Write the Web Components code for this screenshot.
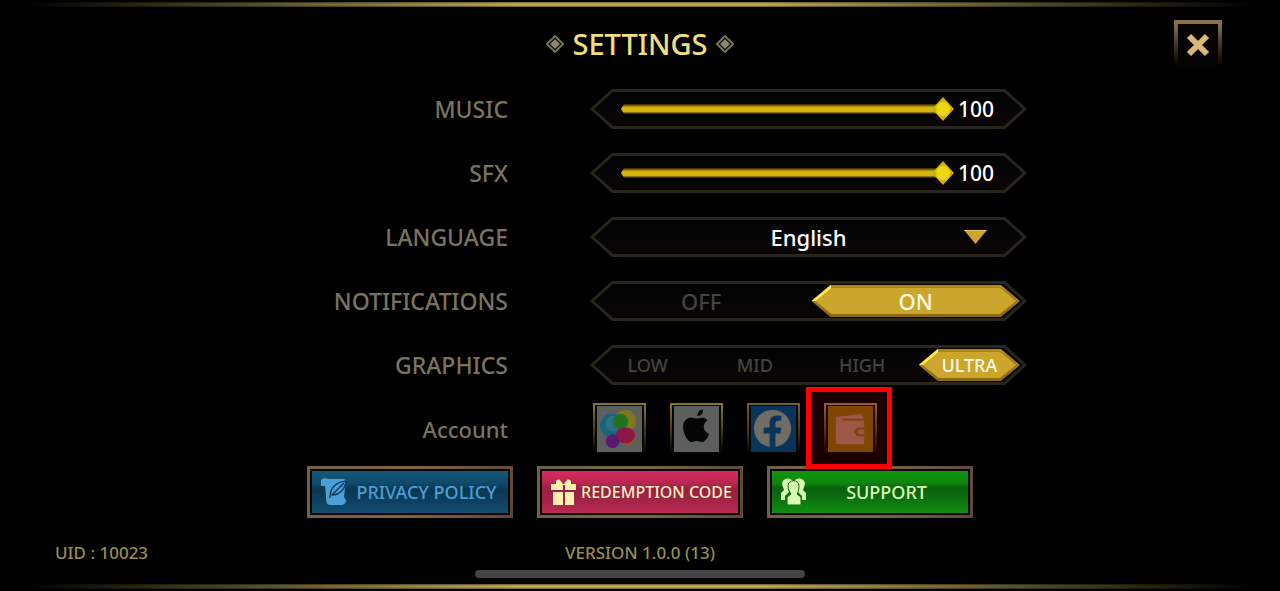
<!DOCTYPE html>
<html lang="en">
<head>
<meta charset="utf-8">
<meta name="viewport" content="width=device-width, initial-scale=1">
<title>Settings</title>
<style>
  html, body { margin: 0; background: #000; }
  body { font-family: "Noto Sans", "Open Sans", sans-serif; font-weight: 500; }
</style>
</head>
<body>
<settings-screen>
  <setting-slider label="MUSIC" value="100"></setting-slider>
  <setting-slider label="SFX" value="100"></setting-slider>
  <setting-select label="LANGUAGE" options="English"></setting-select>
  <setting-choice label="NOTIFICATIONS" options="OFF,ON" value="ON"></setting-choice>
  <setting-choice label="GRAPHICS" options="LOW,MID,HIGH,ULTRA" value="ULTRA" compact></setting-choice>
  <setting-accounts label="Account">
    <account-tile name="Game Center" tone="light">
      <svg viewBox="0 0 46 46" width="45" height="45" aria-hidden="true">
        <circle cx="29" cy="15" r="11" fill="#85781c"/>
        <circle cx="15" cy="20" r="12" fill="#19637e"/>
        <circle cx="17" cy="18" r="8" fill="#2a7186"/>
        <ellipse cx="24" cy="16" rx="8" ry="8" fill="#247021"/>
        <circle cx="31" cy="31" r="9" fill="#8c5a27"/>
        <ellipse cx="29" cy="30" rx="10" ry="8" fill="#8d1745"/>
        <circle cx="16" cy="36" r="7" fill="#561a6e"/>
      </svg>
    </account-tile>
    <account-tile name="Apple" tone="light">
      <svg viewBox="-2 -1 50 50" width="45" height="45" aria-hidden="true">
        <path fill="#050505" d="M24 10c0-4 3-7 6-7 1 4-3 8-6 7zM35 15c-6 4-5 12 2 15-2 5-5 9-8 9-2 0-3-1-6-1-2 0-3 1-6 1-5 0-16-22-2-27 3-1 6 1 8 1 3 0 9-3 12 2z"/>
      </svg>
    </account-tile>
    <account-tile name="Facebook" tone="blue">
      <svg viewBox="0 0 46 46" width="45" height="45" aria-hidden="true">
        <circle cx="22" cy="23" r="19" fill="#716d64"/>
        <path fill="#0b345c" d="M19 42V28h-6v-6h6v-4c0-7 4-9 12-8v5c-5 0-6 0-6 4v3h6l-1 6h-5v14z"/>
      </svg>
    </account-tile>
    <account-tile name="Wallet" tone="amber" highlighted>
      <svg viewBox="0 0 46 46" width="45" height="45" aria-hidden="true">
        <path fill="#946052" d="M8 11l12-1 13-2 3 3v2H15v2h22v7h-7l-4 4 4 5h7v8H8z"/>
        <path fill="#946052" d="M32 24h5v5h-5l-2-3z"/>
      </svg>
    </account-tile>
  </setting-accounts>
  <action-button slot="actions" tone="privacy" text="PRIVACY POLICY">
    <svg viewBox="0 0 27 28" width="27" height="28" aria-hidden="true">
      <path fill="#4a9fd6" d="M1 2c2-2 5-2 7-1h15c2 0 3 1 3 2l-2 16 2 3c0 3-2 5-5 5H10c-4 0-4-5-4-9L5 8H1z"/>
      <path fill="#4a9fd6" stroke="#0d3b59" stroke-width="1.5" stroke-linejoin="round" d="M10 20c0-10 6-16 16-17-1 8-6 14-14 14l12-12"/>
    </svg>
  </action-button>
  <action-button slot="actions" tone="redeem" text="REDEMPTION CODE">
    <svg viewBox="0 0 27 28" width="27" height="28" aria-hidden="true">
      <path fill="#fff0b0" d="M1 6h5V4c0-2 2-3 4-2l3 4h1l3-4c2-1 4 0 4 2v2h5v6H15V7h-2v5H1zM3 14h10v13H3zM15 14h9v13h-9z"/>
    </svg>
  </action-button>
  <action-button slot="actions" tone="support" text="SUPPORT">
    <svg viewBox="0 0 27 28" width="27" height="28" aria-hidden="true">
      <path fill="#d9ffae" d="M2 6c0-6 9-8 11-2-5 2-6 6-4 10l-4 4v4H1v-7l3-3zM25 6c0-6-9-8-11-2 5 2 6 6 4 10l4 4v4h4v-7l-3-3z"/>
      <path fill="#d9ffae" stroke="#0b6b12" stroke-width="1" d="M8 8c0-7 11-7 11 0 0 4-1 6-2 8l4 3v8H7v-8l4-3c-1-2-3-4-3-8z"/>
    </svg>
  </action-button>
  <span slot="uid">UID : 10023</span>
  <span slot="version">VERSION 1.0.0 (13)</span>
</settings-screen>

<script>
  const html = (el, markup) => {
    const t = document.createElement("template");
    t.innerHTML = markup;
    el.attachShadow({ mode: "open" }).append(t.content.cloneNode(true));
  };

  class SettingsScreen extends HTMLElement {
    constructor() {
      super();
      html(this, `
        <style>
          :host { display: flex; flex-direction: column; min-height: 100vh; background: #000; box-sizing: border-box; padding: 2px 0; }
          .rule { height: 5px; background: linear-gradient(90deg, #000 2%, transparent 40%, transparent 60%, #000 98%), linear-gradient(#5d5430, #b9a955 35%, #b9a955 65%, #5d5430); }
          header { display: grid; grid-template-columns: 1fr auto 1fr; align-items: center; box-sizing: border-box; height: 70px; padding: 4px 58px 0; }
          .title { grid-column: 2; display: flex; align-items: center; gap: 8px; }
          h1 { margin: 0; font-size: 29px; line-height: 36px; font-weight: 500; color: #f1e07a; }
          .close { justify-self: end; display: grid; place-items: center; width: 48px; height: 48px; padding: 0 0 2px; background: #050302; border: 4px solid; border-image: linear-gradient(#8b744c, #3b3220 50%, #000 95%) 1; border-bottom: 0; }
          main { display: flex; flex-direction: column; }
          .actions { display: flex; flex-wrap: wrap; justify-content: center; gap: 24px; margin-top: 5px; }
          footer { display: grid; grid-template-columns: 1fr auto 1fr; align-items: center; height: 24px; margin-top: 23px; padding: 0 55px; font-size: 17px; line-height: 24px; color: #978f4c; }
          .home { width: 330px; height: 8px; margin: 5px auto 6px; border-radius: 4px; background: #444; }
          .end { margin-top: auto; }
        </style>
        <div class="rule"></div>
        <header>
          <div class="title">
            <gem-mark></gem-mark><h1>SETTINGS</h1><gem-mark></gem-mark>
          </div>
          <button class="close" type="button" aria-label="Close">
            <svg viewBox="0 0 24 24" width="24" height="24" aria-hidden="true"><path d="M3 3l18 18M21 3L3 21" stroke="#dcb877" stroke-width="6"/></svg>
          </button>
        </header>
        <main><slot></slot></main>
        <div class="actions"><slot name="actions"></slot></div>
        <footer><slot name="uid"></slot><slot name="version"></slot></footer>
        <div class="home"></div>
        <div class="rule end"></div>`);
    }
  }

  class GemMark extends HTMLElement {
    constructor() {
      super();
      html(this, `
        <style>:host { display: block; width: 18px; height: 18px; } svg { display: block; }</style>
        <svg viewBox="0 0 18 18" width="18" height="18" aria-hidden="true">
          <path d="M9 1l8 8-8 8-8-8z" fill="none" stroke="#77705a" stroke-width="2"/>
          <path d="M9 4l5 5-5 5-5-5z" fill="#8d866e"/>
        </svg>`);
    }
  }

  const rowStyle = `
    :host { display: grid; grid-template-columns: minmax(0, 255px) minmax(0, 437px); column-gap: 82px; justify-content: center; align-items: center; height: 64px; }
    .label { text-align: right; font-size: 23px; line-height: 32px; color: #7a745f; }`;

  class HexFrame extends HTMLElement {
    constructor() {
      super();
      html(this, `
        <style>
          :host { --hex: polygon(0 50%, 22px 0, calc(100% - 22px) 0, 100% 50%, calc(100% - 22px) 100%, 22px 100%); display: grid; height: 40px; padding: 3px 4px; box-sizing: border-box; background: #29261c; clip-path: var(--hex); }
          .inner { display: flex; align-items: center; min-width: 0; background: linear-gradient(#030304, #090605); clip-path: polygon(0 50%, 19px 0, calc(100% - 19px) 0, 100% 50%, calc(100% - 19px) 100%, 19px 100%); }
        </style>
        <div class="inner"><slot></slot></div>`);
    }
  }

  class SettingSlider extends HTMLElement {
    constructor() {
      super();
      const v = this.getAttribute("value");
      html(this, `
        <style>${rowStyle}
          input { flex: 1; min-width: 0; height: 24px; margin: 0 4px 0 27px; appearance: none; background: none; }
          input::-webkit-slider-runnable-track { height: 10px; background: linear-gradient(#4a3308 1px, #a98508 2px, #d8b90c 4px, #d6b50b 7px, #c9ac28 8px, #4a3308 9px) left / calc(100% - 11px) 100% no-repeat; clip-path: polygon(0 50%, 3px 0, 3px -10px, 100% -10px, 100% 20px, 3px 20px, 3px 100%); }
          input::-webkit-slider-thumb { appearance: none; width: 22px; height: 24px; margin-top: -7px; background: radial-gradient(circle, #ecd916 6px, #cdb00a 8px); clip-path: polygon(50% 0, 100% 50%, 50% 100%, 0 50%); }
          output { width: 65px; font-size: 21px; line-height: 28px; color: #fff; }
        </style>
        <label class="label" for="range">${this.getAttribute("label")}</label>
        <hex-frame>
          <input id="range" type="range" min="0" max="100" value="${v}">
          <output for="range">${v}</output>
        </hex-frame>`);
      const input = this.shadowRoot.querySelector("input");
      input.addEventListener("input", () => this.shadowRoot.querySelector("output").textContent = input.value);
    }
  }

  class SettingSelect extends HTMLElement {
    constructor() {
      super();
      const options = this.getAttribute("options").split(",").map(o => `<option>${o}</option>`).join("");
      html(this, `
        <style>${rowStyle}
          .field { position: relative; flex: 1; display: grid; align-items: center; }
          select { appearance: none; width: 100%; height: 34px; padding: 0; border: 0; background: none; color: #fff; font: inherit; font-size: 22px; line-height: 32px; text-align: center; text-align-last: center; }
          option { background: #0a0705; }
          svg { position: absolute; right: 36px; pointer-events: none; }
        </style>
        <label class="label" for="list">${this.getAttribute("label")}</label>
        <hex-frame>
          <div class="field">
            <select id="list">${options}</select>
            <svg viewBox="0 0 23 14" width="23" height="14" aria-hidden="true"><path d="M0 0h23L11.500 14z" fill="#cda32b"/><path d="M0 0h23l-1 1H1z" fill="#ecca62"/></svg>
          </div>
        </hex-frame>`);
    }
  }

  class SettingChoice extends HTMLElement {
    constructor() {
      super();
      const value = this.getAttribute("value");
      const items = this.getAttribute("options").split(",").map(o => `
        <label class="item"><input type="radio" name="choice" value="${o}" ${o === value ? "checked" : ""}><span>${o}</span></label>`).join("");
      html(this, `
        <style>${rowStyle}
          .group { flex: 1; display: flex; }
          .item { flex: 1; display: grid; height: 32px; margin: 0 3px; position: relative; font-size: 22px; line-height: 32px; text-align: center; color: #45433f; }
          :host([compact]) .item { font-size: 18px; }
          input { position: absolute; inset: 0; width: 100%; height: 100%; margin: 0; opacity: 0; }
          span { position: relative; isolation: isolate; display: block; pointer-events: none; }
          input:checked + span { color: #fffbe6; }
          input:checked + span::before, input:checked + span::after { content: ""; position: absolute; z-index: -1; }
          input:checked + span::before { inset: 0; background: linear-gradient(#ffe84a, #ffe84a) left top / 19px 16px no-repeat, linear-gradient(#b18a1e, #8a6815); clip-path: polygon(0 50%, 19px 0, calc(100% - 19px) 0, 100% 50%, calc(100% - 19px) 100%, 19px 100%); }
          input:checked + span::after { inset: 3px 4px; background: #cca62c; clip-path: polygon(0 50%, 16px 0, calc(100% - 16px) 0, 100% 50%, calc(100% - 16px) 100%, 16px 100%); }
        </style>
        <div class="label" id="name">${this.getAttribute("label")}</div>
        <hex-frame><div class="group" role="radiogroup" aria-labelledby="name">${items}</div></hex-frame>`);
    }
  }

  class SettingAccounts extends HTMLElement {
    constructor() {
      super();
      html(this, `
        <style>${rowStyle}
          .label { font-size: 22px; }
          .tiles { display: flex; gap: 24px; padding: 0 3px; }
        </style>
        <div class="label" id="name">${this.getAttribute("label")}</div>
        <div class="tiles" role="group" aria-labelledby="name"><slot></slot></div>`);
    }
  }

  class AccountTile extends HTMLElement {
    constructor() {
      super();
      html(this, `
        <style>
          :host { position: relative; display: block; --fill: #5b605f; --edge: #857a2a; }
          :host([tone="blue"]) { --fill: #0b345c; --edge: #6b6232; }
          :host([tone="amber"]) { --fill: #704f00; --edge: #80683a; }
          button { display: grid; width: 53px; height: 52px; box-sizing: border-box; padding: 1px; border: 2px solid; border-image: linear-gradient(var(--edge), #39330f 60%, #000) 1; background: #080704; overflow: hidden; }
          .face { display: block; height: 46px; margin: 0 1px; overflow: hidden; background: var(--fill); }
          .mark { display: none; }
          :host([highlighted]) .mark { display: block; position: absolute; inset: -16px -15px -14px -18px; border: 5px solid #f00; background: rgba(255, 0, 0, .1); pointer-events: none; z-index: 2; }
        </style>
        <button type="button" aria-label="${this.getAttribute("name")}"><span class="face"><slot></slot></span></button>
        <div class="mark"></div>`);
    }
  }

  class ActionButton extends HTMLElement {
    constructor() {
      super();
      html(this, `
        <style>
          :host { display: block; width: 206px; color: #4a9fd6; --fill: linear-gradient(#145b80, #104a6b 30%, #0b3652 45%, #0e4060 70%, #154f70); --size: 18px; }
          :host([tone="redeem"]) { color: #fff0bd; --fill: linear-gradient(#df2d60, #b92750 30%, #961f41 45%, #a42448 70%, #bf2b53); --size: 16px; }
          :host([tone="support"]) { color: #dcffb0; --fill: linear-gradient(#12980f, #0d850f 30%, #09610e 42%, #0b6d0f 60%, #12910f); }
          button { display: flex; align-items: center; width: 100%; height: 52px; padding: 0 4px 0 10px; border: 3px solid; border-image: linear-gradient(100deg, #6e604b, #7d6643 50%, #5b4a3a) 1; background: var(--fill); background-clip: padding-box; box-shadow: inset 0 0 0 2px #0c0505; color: inherit; font: inherit; font-size: var(--size); line-height: 24px; }
          .text { flex: 1; text-align: center; white-space: nowrap; }
          ::slotted(svg) { display: block; flex: none; }
        </style>
        <button type="button"><slot></slot><span class="text">${this.getAttribute("text")}</span></button>`);
    }
  }

  customElements.define("gem-mark", GemMark);
  customElements.define("hex-frame", HexFrame);
  customElements.define("setting-slider", SettingSlider);
  customElements.define("setting-select", SettingSelect);
  customElements.define("setting-choice", SettingChoice);
  customElements.define("account-tile", AccountTile);
  customElements.define("setting-accounts", SettingAccounts);
  customElements.define("action-button", ActionButton);
  customElements.define("settings-screen", SettingsScreen);
</script>
</body>
</html>
